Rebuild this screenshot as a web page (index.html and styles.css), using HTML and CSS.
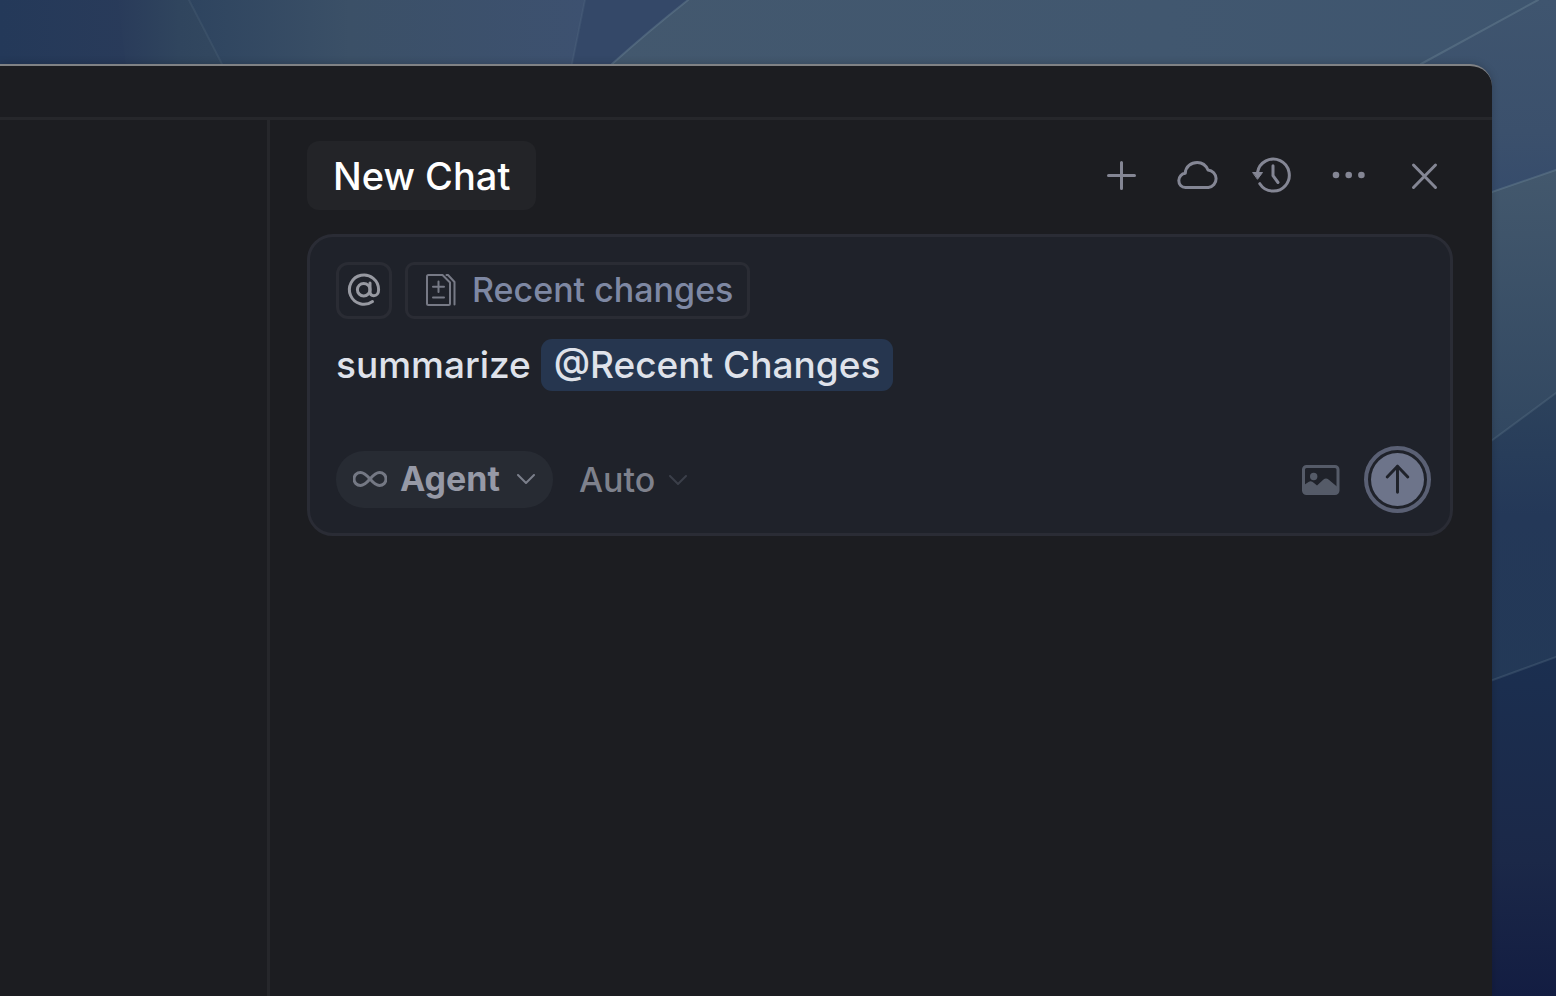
FILE: index.html
```html
<!DOCTYPE html>
<html lang="en">
<head>
<meta charset="utf-8">
<title>New Chat</title>
<link rel="stylesheet" href="styles.css">
</head>
<body>
<svg class="wallpaper" viewBox="0 0 1556 996" preserveAspectRatio="none" aria-hidden="true">
  <defs>
    <linearGradient id="far-left" x1="0" x2="1" y1="0" y2="0">
      <stop offset="0" stop-color="#243959"/><stop offset="1" stop-color="#293b5a"/>
    </linearGradient>
    <linearGradient id="edge-fade" x1="0" x2="1" y1="0" y2="0">
      <stop offset="0" stop-color="#293b5a"/><stop offset=".5" stop-color="#30455e"/><stop offset="1" stop-color="#344960"/>
    </linearGradient>
    <linearGradient id="middle" x1="0" x2="1" y1="0" y2="0">
      <stop offset="0" stop-color="#2e445f"/><stop offset=".4" stop-color="#3b5067"/><stop offset="1" stop-color="#3d5170"/>
    </linearGradient>
    <linearGradient id="top-right" x1="0" x2="1" y1="0" y2="0">
      <stop offset="0" stop-color="#43586e"/><stop offset=".6" stop-color="#41576f"/><stop offset="1" stop-color="#3e556f"/>
    </linearGradient>
    <linearGradient id="right-a" x1="0" x2="0" y1="0" y2="1">
      <stop offset="0" stop-color="#3f556f"/><stop offset=".6" stop-color="#3b506c"/><stop offset="1" stop-color="#344a6b"/>
    </linearGradient>
    <linearGradient id="right-b" x1="0" x2="0" y1="0" y2="1">
      <stop offset="0" stop-color="#43586d"/><stop offset="1" stop-color="#2f455f"/>
    </linearGradient>
    <linearGradient id="right-c" x1="0" x2="0" y1="0" y2="1">
      <stop offset="0" stop-color="#2c425c"/><stop offset=".4" stop-color="#243858"/><stop offset="1" stop-color="#233957"/>
    </linearGradient>
    <linearGradient id="right-d" x1="0" x2="0" y1="0" y2="1">
      <stop offset="0" stop-color="#1b2f50"/><stop offset=".6" stop-color="#1b2848"/><stop offset="1" stop-color="#131d42"/>
    </linearGradient>
  </defs>
  <rect width="130" height="100" fill="url(#far-left)"/>
  <path d="M118 0H200L240 100H130Z" fill="url(#edge-fade)"/>
  <path d="M189 0H590V100H241Z" fill="url(#middle)"/>
  <path d="M585 0H700V100H565Z" fill="#344868"/>
  <path d="M688 0Q650 30 612 64L580 100H1556V0Z" fill="url(#top-right)"/>
  <path d="M1538 0L1340 108L1480 220L1556 200V0Z" fill="url(#right-a)"/>
  <path d="M1460 203L1556 170V420L1460 480Z" fill="url(#right-b)"/>
  <path d="M1460 464L1556 393V690L1460 700Z" fill="url(#right-c)"/>
  <path d="M1460 692L1556 657V996H1460Z" fill="url(#right-d)"/>
  <g fill="none" stroke="#7d97a5" stroke-opacity=".3" stroke-width="2">
    <path d="M688 0Q650 30 612 64"/>
    <path d="M189 0L222 64M585 0L572 64" stroke-opacity=".12"/>
    <path d="M1538 0L1421 64M1460 203L1556 170"/>
    <path d="M1460 464L1556 393M1460 692L1556 657" stroke-opacity=".2"/>
  </g>
</svg>

<main class="window">
  <header class="titlebar"></header>
  <div class="workspace">
    <div class="editor"></div>
    <section class="chat" aria-label="Chat">
      <div class="chat-header">
        <button class="tab" type="button">New Chat</button>
        <div class="actions">
          <button class="icon-button" type="button" aria-label="New chat">
            <svg viewBox="0 0 44 44"><path d="M22.500 9.500V35.500M9.500 22.500H35.500"/></svg>
          </button>
          <button class="icon-button" type="button" aria-label="Background agents">
            <svg viewBox="0 0 44 44"><path d="M10.500 34.500C6.500 34.500 3.800 31.500 3.800 27.500C3.800 24 6.500 20.600 10.300 20.300C10.500 13.600 16 9.500 22.300 9.500C27.200 9.500 31 12.400 33 17A8.800 8.800 0 0 1 33.400 34.500Z"/></svg>
          </button>
          <button class="icon-button" type="button" aria-label="Chat history">
            <svg viewBox="0 0 44 44"><path d="M6.500 19.500A16 16 0 1 1 8.800 30.700M22 12.700V22.700L27 29.500"/><path class="solid" d="M2 19.500H11.500L6.700 26Z"/></svg>
          </button>
          <button class="icon-button" type="button" aria-label="More actions">
            <svg viewBox="0 0 44 44"><g class="dots"><circle cx="9" cy="22" r="3.300"/><circle cx="21.700" cy="22" r="3.300"/><circle cx="34.400" cy="22" r="3.300"/></g></svg>
          </button>
          <button class="icon-button" type="button" aria-label="Close">
            <svg viewBox="0 0 44 44"><path d="M10.500 12L32.500 34.500M32.500 12L10.500 34.500"/></svg>
          </button>
        </div>
      </div>

      <form class="composer">
        <div class="context">
          <button class="at-button" type="button" aria-label="Add context">
            <svg viewBox="0 0 50 50"><circle cx="24.700" cy="24.700" r="6.300"/><path d="M31 18V26.500C31 29 32.500 30.700 34.800 30.700C37.600 30.700 39.600 28.500 39.600 24.700A14.600 14.600 0 1 0 33.500 36.500"/></svg>
          </button>
          <button class="context-chip" type="button">
            <svg viewBox="0 0 30 32"><path d="M2.500 1H16.500L24 8.500V29.500Q24 31 22.500 31H2.500Q1 31 1 29.500V2.500Q1 1 2.500 1ZM20.500 1H22L28.500 8V30.500M12.500 7.500V18M7 12.700H18M7 23.500H18"/></svg>
            <span>Recent changes</span>
          </button>
        </div>
        <div class="prompt" contenteditable="true" role="textbox" aria-label="Message" spellcheck="false">summarize <span class="mention">@Recent Changes</span></div>
        <div class="toolbar">
          <label class="picker mode">
            <svg class="infinity" viewBox="0 0 34 16"><path d="M17 8C13.500 4 11 1.500 7.500 1.500A6.500 6.500 0 0 0 7.500 14.500C11 14.500 13.500 12 17 8C20.500 4 23 1.500 26.500 1.500A6.500 6.500 0 0 1 26.500 14.500C23 14.500 20.500 12 17 8Z"/></svg>
            <select aria-label="Mode"><option>Agent</option></select>
            <svg class="chevron" viewBox="0 0 18 10"><path d="M1 1L9 9L17 1"/></svg>
          </label>
          <label class="picker model">
            <select aria-label="Model"><option>Auto</option></select>
            <svg class="chevron" viewBox="0 0 18 10"><path d="M1 1L9 9L17 1"/></svg>
          </label>
          <button class="attach" type="button" aria-label="Attach image">
            <svg viewBox="0 0 38 30"><rect x="1.500" y="1.500" width="34.500" height="27" rx="3"/><circle cx="11.700" cy="11.500" r="3.700"/><path d="M2 20L6.500 17Q9.300 15.300 12 18L15 20.500L21.500 14.500Q24 12.500 26.500 14.500L35.500 22V26Q35.500 28.500 33 28.500H4.500Q2 28.500 2 26Z"/></svg>
          </button>
          <button class="send" type="submit" aria-label="Send">
            <svg viewBox="0 0 54 54"><path d="M27 40V13.500M16.500 24.500L27 13.500L37.500 24.500"/></svg>
          </button>
        </div>
      </form>
    </section>
  </div>
</main>
</body>
</html>
```

FILE: styles.css
```css
* {
  box-sizing: border-box;
}

body {
  margin: 0;
  background: #1b2848;
  font-family: Inter, "Liberation Sans", sans-serif;
  overflow: hidden;
}

button,
select {
  appearance: none;
  margin: 0;
  padding: 0;
  border: 0;
  background: none;
  color: inherit;
  font: inherit;
}

svg {
  display: block;
  flex: none;
  fill: none;
  stroke: currentColor;
  stroke-linecap: round;
  stroke-linejoin: round;
}

.wallpaper {
  position: absolute;
  inset: 0;
  z-index: -1;
  width: 100%;
  height: 100%;
  stroke: none;
}

.window {
  display: flex;
  flex-direction: column;
  height: calc(100vh - 64px);
  margin: 64px 64px 0 0;
  border-top: 2px solid #808285;
  border-top-right-radius: 22px;
  background: #1c1d21;
  box-shadow: 0 0 8px rgba(0, 0, 0, 0.2);
}

.titlebar {
  height: 54px;
  border-bottom: 3px solid #26272b;
}

.workspace {
  display: flex;
  flex: 1;
}

.editor {
  flex: none;
  width: 270px;
  border-right: 3px solid #26272b;
}

.chat {
  flex: 1;
  min-width: 0;
  padding: 21px 39px 0 37px;
}

.chat-header {
  display: flex;
  align-items: center;
  justify-content: space-between;
  margin-bottom: 24px;
}

.tab {
  height: 69px;
  padding: 0 26px;
  border-radius: 12px;
  background: #232428;
  color: #fff;
  font-size: 38px;
  font-weight: 500;
}

.actions {
  display: flex;
  gap: 32px;
  padding: 0 6px 1px 0;
  color: #848694;
}

.icon-button svg {
  width: 44px;
  height: 44px;
  stroke-width: 3;
}

.solid,
.dots {
  fill: currentColor;
}

.solid {
  stroke-width: 1;
}

.dots {
  stroke: none;
}

.composer {
  padding: 25px 19px 20px 26px;
  border: 3px solid #2a2c35;
  border-radius: 26px;
  background: #1f222a;
}

.context {
  display: flex;
  gap: 13px;
}

.at-button,
.context-chip {
  display: flex;
  align-items: center;
  height: 57px;
  border: 3px solid #2a2c34;
}

.at-button {
  padding-bottom: 2px;
  border-radius: 12px;
  color: #9799a1;
}

.at-button svg {
  width: 50px;
  height: 50px;
  stroke-width: 3;
}

.context-chip {
  gap: 16px;
  padding: 0 14px 2px 18px;
  border-radius: 9px;
  color: #7e88a3;
  font-size: 34px;
  font-weight: 500;
}

.context-chip svg {
  width: 30px;
  height: 32px;
  color: #777a86;
  stroke-width: 2;
}

.prompt {
  margin: 20px 0 55px;
  color: #dfe2ea;
  font-size: 37px;
  font-weight: 500;
  line-height: 52px;
  outline: none;
}

.mention {
  display: inline-block;
  padding: 0 13px;
  border-radius: 11px;
  background: #26364f;
}

.toolbar {
  display: flex;
  align-items: center;
}

.picker {
  display: flex;
  align-items: center;
  height: 57px;
  font-size: 34px;
}

.mode {
  gap: 13px;
  padding: 0 18px 2px 17px;
  border-radius: 28px;
  background: #272b33;
  color: #9699a6;
  font-weight: 700;
}

.infinity {
  width: 34px;
  height: 16px;
  color: #747884;
  stroke-width: 3;
}

.chevron {
  width: 18px;
  height: 10px;
  stroke-width: 2;
}

.mode .chevron {
  margin-left: 4px;
  color: #7b7f8b;
}

.model {
  gap: 13px;
  margin-left: 26px;
  color: #7e818c;
  font-weight: 500;
}

.model .chevron {
  color: #3b3f49;
}

.attach {
  margin: 0 24px 0 auto;
  color: #555b68;
}

.attach svg {
  width: 38px;
  height: 30px;
  stroke-width: 3;
}

.attach circle,
.attach path {
  fill: currentColor;
  stroke: none;
}

.send {
  padding: 3px;
  border: 4px solid #5a6074;
  border-radius: 50%;
}

.send svg {
  width: 53px;
  height: 53px;
  border-radius: 50%;
  background: #6d748a;
  color: #1f222a;
  stroke-width: 3;
}
```
